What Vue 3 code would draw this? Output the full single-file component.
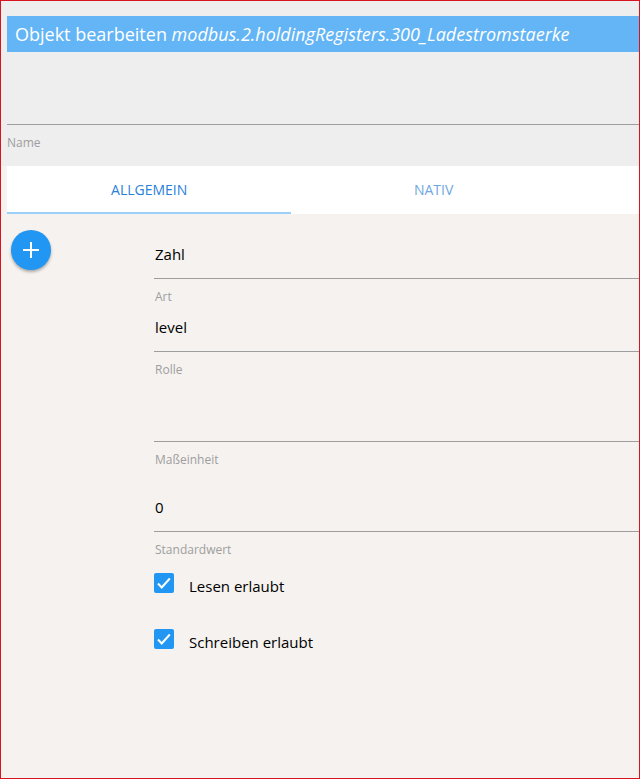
<script setup>
import { ref } from 'vue'

const name = ref('')
const activeTab = ref('common')
const tabs = [
  { id: 'common', label: 'Allgemein' },
  { id: 'native', label: 'Nativ' },
]
const type = ref('number')
const role = ref('level')
const unit = ref('')
const defaultValue = ref('0')
const flags = ref([
  { id: 'read', label: 'Lesen erlaubt', checked: true },
  { id: 'write', label: 'Schreiben erlaubt', checked: true },
])
</script>

<template>
  <main class="dialog">
    <header class="head">
      <h1 class="title">Objekt bearbeiten <em class="object-id">modbus.2.holdingRegisters.300_Ladestromstaerke</em></h1>
      <div class="field name-field">
        <input id="name" v-model="name" class="control" type="text" />
        <label class="caption" for="name">Name</label>
      </div>
    </header>

    <nav class="tabs" role="tablist">
      <button
        v-for="tab in tabs"
        :key="tab.id"
        class="tab"
        :class="{ active: tab.id === activeTab }"
        type="button"
        role="tab"
        :aria-selected="tab.id === activeTab"
        @click="activeTab = tab.id"
      >{{ tab.label }}</button>
    </nav>

    <section class="panel">
      <div class="side">
        <button class="add" type="button" aria-label="+">
          <svg viewBox="0 0 24 24" width="24" height="24" aria-hidden="true">
            <path d="M12 4v16M4 12h16" fill="none" stroke="#fff" stroke-width="2" />
          </svg>
        </button>
      </div>
      <form class="form" @submit.prevent>
        <div class="field">
          <select id="type" v-model="type" class="control">
            <option value="number">Zahl</option>
          </select>
          <label class="caption" for="type">Art</label>
        </div>
        <div class="field">
          <input id="role" v-model="role" class="control" type="text" />
          <label class="caption" for="role">Rolle</label>
        </div>
        <div class="field spaced">
          <input id="unit" v-model="unit" class="control" type="text" />
          <label class="caption" for="unit">Maßeinheit</label>
        </div>
        <div class="field spaced">
          <input id="default" v-model="defaultValue" class="control" type="text" />
          <label class="caption" for="default">Standardwert</label>
        </div>
        <div class="flags">
          <label v-for="flag in flags" :key="flag.id" class="flag" :for="flag.id">
            <span class="box">
              <input :id="flag.id" v-model="flag.checked" class="check" type="checkbox" />
              <svg v-if="flag.checked" class="mark" viewBox="0 0 20 20" aria-hidden="true">
                <path d="M4 10.5L7.7 14.5L15.8 5.5" fill="none" stroke="#fff" stroke-width="2" />
              </svg>
            </span>
            <span class="flag-text">{{ flag.label }}</span>
          </label>
        </div>
      </form>
    </section>
  </main>
</template>

<style>
body {
  margin: 0;
}
</style>

<style scoped>
.dialog {
  box-sizing: border-box;
  min-height: 100vh;
  border: 1px solid #d9141e;
  background: #f5f2ef;
  color: #000;
  font-family: "Segoe UI", "Open Sans", "Noto Sans", sans-serif;
  font-size: 15px;
}

.head {
  padding: 15px 0 0 6px;
  background: #eee;
}

.title {
  margin: 0;
  padding: 0 8px;
  background: #64b5f6;
  color: #fff;
  font-size: 18px;
  font-weight: 400;
  line-height: 36px;
}

.field {
  display: flex;
  flex-direction: column;
}

.control {
  box-sizing: border-box;
  width: 100%;
  height: 47px;
  margin: 0;
  padding: 0 0 2px;
  border: 0;
  border-bottom: 1px solid #9e9e9e;
  border-radius: 0;
  outline: 0;
  background: transparent;
  color: inherit;
  font: inherit;
  appearance: none;
}

.form .control,
.form .caption {
  padding-left: 1px;
}

.caption {
  color: #9e9e9e;
  font-size: 12px;
  line-height: 36px;
  height: 26px;
}

.name-field {
  padding: 26px 0 15px;
}

.tabs {
  display: flex;
  margin-left: 6px;
  background: #fff;
}

.tab {
  box-sizing: border-box;
  width: 45%;
  height: 48px;
  padding: 0;
  border: 0;
  border-bottom: 2px solid transparent;
  background: transparent;
  color: #6fa8e0;
  font-family: inherit;
  font-size: 14px;
  text-transform: uppercase;
}

.tab.active {
  border-bottom-color: #9ad0fa;
  color: #2a7fd8;
}

.panel {
  display: grid;
  grid-template-columns: 143px 1fr;
  padding: 16px 0 0 10px;
}

.add {
  display: flex;
  align-items: center;
  justify-content: center;
  width: 40px;
  height: 40px;
  padding: 0;
  border: 0;
  border-radius: 50%;
  background: #2196f3;
  box-shadow: 0 2px 3px rgba(0, 0, 0, 0.3);
}

.form {
  padding-top: 2px;
}

.spaced {
  padding-top: 17px;
}

.flags {
  display: flex;
  flex-direction: column;
  gap: 28px;
  padding-top: 15px;
}

.flag {
  display: flex;
  gap: 15px;
  height: 28px;
}

.box {
  position: relative;
  width: 20px;
  height: 20px;
}

.check {
  display: block;
  width: 20px;
  height: 20px;
  margin: 0;
  border: 2px solid #5a5a5a;
  border-radius: 2px;
  box-sizing: border-box;
  appearance: none;
}

.check:checked {
  border-color: #2196f3;
  background: #2196f3;
}

.mark {
  position: absolute;
  inset: 0;
  pointer-events: none;
}

.flag-text {
  line-height: 26px;
}
</style>
